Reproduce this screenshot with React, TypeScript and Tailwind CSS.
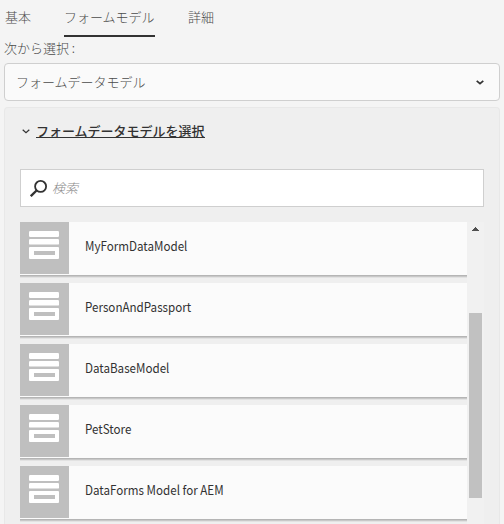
const models = [
  'MyFormDataModel',
  'PersonAndPassport',
  'DataBaseModel',
  'PetStore',
  'DataForms Model for AEM',
];

function FormIcon() {
  return (
    <svg className="mt-[9px] ml-[9px] h-7 w-[30px]" viewBox="0 0 30 28" fill="#fff">
      <rect width="30" height="6" rx="1.2" />
      <rect y="8" width="30" height="5.6" rx="1.2" />
      <path fillRule="evenodd" d="M1 16H29Q30 16 30 17V27Q30 28 29 28H1Q0 28 0 27V17Q0 16 1 16ZM5 20V24H26V20Z" />
    </svg>
  );
}

function Chevron({ className, stroke }: { className: string; stroke: number }) {
  return (
    <svg className={className} viewBox="0 0 8 5" fill="none" stroke="#323232" strokeWidth={stroke}>
      <path d="M0.7 0.8L4 3.7L7.3 0.8" />
    </svg>
  );
}

export default function App() {
  return (
    <div className="flex h-[524px] w-[504px] flex-col overflow-hidden bg-[#f4f4f4] font-['Noto_Sans_CJK_JP',sans-serif] text-[13px] leading-5 text-[#4b4b4b]">
      <nav className="flex h-[37px] shrink-0 pl-[5px] font-light">
        <span className="w-[59px] pt-[7px]">基本</span>
        <span className="w-[91px] border-b-2 border-[#323232] pt-[7px] whitespace-nowrap">フォームモデル</span>
        <span className="pl-[33px] pt-[7px]">詳細</span>
      </nav>
      <div className="h-[26px] shrink-0 pt-px pl-1 font-light">次から選択 :</div>
      <div className="mx-1 flex h-[38px] shrink-0 items-center justify-between rounded border border-[#cfcfcf] bg-[#fafafa] pr-[15px] pl-[11px] font-light">
        <span>フォームデータモデル</span>
        <Chevron className="h-[5px] w-2" stroke={1.7} />
      </div>
      <section className="mx-1 mt-1.5 flex min-h-0 flex-1 flex-col rounded-t border border-b-0 border-[#e8e8e8] bg-[#efefef] pl-[15px]">
        <div className="flex h-[61px] shrink-0 items-start pt-3.5">
          <Chevron className="mt-[7px] mr-1.5 ml-0.5 h-[5px] w-2" stroke={1.2} />
          <span className="h-4 border-b border-[#323232] leading-[17px] font-medium text-[#323232]">フォームデータモデルを選択</span>
        </div>
        <div className="flex h-[38px] w-[464px] shrink-0 items-center border border-[#cfcfcf] bg-white pl-[9px]">
          <svg className="h-[17px] w-[17px]" viewBox="0 0 17 17" fill="none" stroke="#323232">
            <circle cx="10.6" cy="6.4" r="5.5" strokeWidth="1.8" />
            <path d="M6.8 10.2L0.8 16.2" strokeWidth="2.3" />
          </svg>
          <span className="ml-[5px] font-light text-[#8a8a8a] italic">検索</span>
        </div>
        <div className="mt-[15px] flex min-h-0 w-[464px] flex-1">
          <div className="flex w-[447px] flex-col gap-2">
            {models.map((name) => (
              <div key={name} className="flex h-[53px] shrink-0 bg-[#fbfbfb] shadow-[0_1px_0_#b5b5b5,0_2px_0_#c8c8c8,0_3px_0_#e2e2e2]">
                <div className="h-[52px] w-[49px] bg-[#bfbfbf]">
                  <FormIcon />
                </div>
                <span className="ml-4 origin-left scale-x-[0.893] pt-3.5 whitespace-nowrap text-[#323232]">{name}</span>
              </div>
            ))}
          </div>
          <div className="flex w-[17px] flex-col items-center bg-[#f1f1f1]">
            <svg className="mt-[5px] h-1 w-[7px]" viewBox="0 0 7 4" fill="#505050">
              <path d="M0 4V3H1V2H2V1H3V0H4V1H5V2H6V3H7V4Z" />
            </svg>
            <div className="mt-[82px] h-[185px] w-[13px] shrink-0 bg-[#c1c1c1]" />
          </div>
        </div>
      </section>
    </div>
  );
}
